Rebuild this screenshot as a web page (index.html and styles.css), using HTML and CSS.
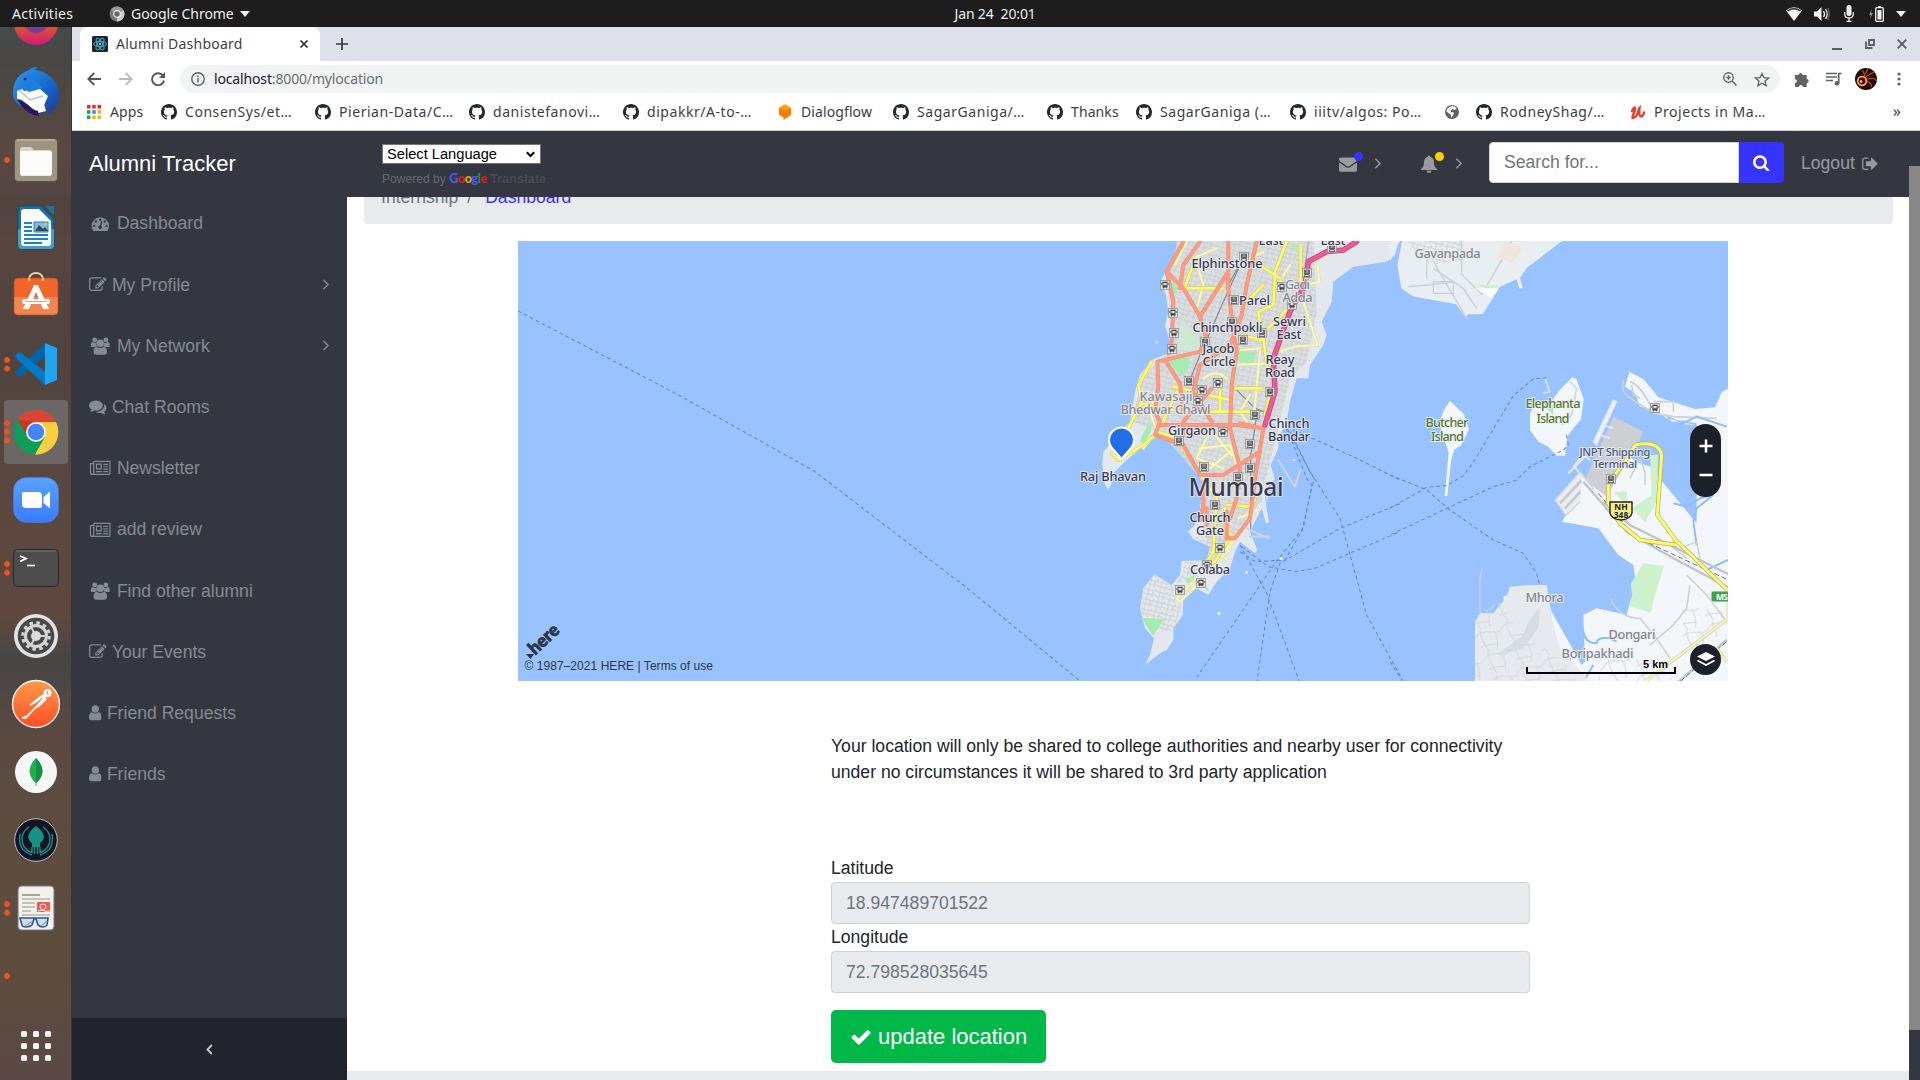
FILE: index.html
```html
<!DOCTYPE html>
<html lang="en">
<head>
<meta charset="utf-8">
<title>Alumni Dashboard</title>
<link rel="stylesheet" href="styles.css">
</head>
<body>
<svg class="defs" width="0" height="0" aria-hidden="true">
  <symbol id="github" viewBox="0 0 16 16"><path d="M8 0C3.58 0 0 3.58 0 8c0 3.54 2.29 6.53 5.47 7.59.4.07.55-.17.55-.38 0-.19-.01-.82-.01-1.49-2.01.37-2.53-.49-2.69-.94-.09-.23-.48-.94-.82-1.13-.28-.15-.68-.52-.01-.53.63-.01 1.08.58 1.23.82.72 1.21 1.87.87 2.33.66.07-.52.28-.87.51-1.07-1.78-.2-3.64-.89-3.64-3.95 0-.87.31-1.59.82-2.15-.08-.2-.36-1.02.08-2.12 0 0 .67-.21 2.2.82.64-.18 1.32-.27 2-.27s1.36.09 2 .27c1.53-1.04 2.2-.82 2.2-.82.44 1.1.16 1.92.08 2.12.51.56.82 1.27.82 2.15 0 3.07-1.87 3.75-3.65 3.95.29.25.54.73.54 1.48 0 1.07-.01 1.93-.01 2.2 0 .21.15.46.55.38A8.01 8.01 0 0016 8c0-4.42-3.58-8-8-8z"/></symbol>
  <symbol id="angle" viewBox="595 320 580 1280"><path d="M1171 960q0 13-10 23l-466 466q-10 10-23 10t-23-10l-50-50q-10-10-10-23t10-23l393-393-393-393q-10-10-10-23t10-23l50-50q10-10 23-10t23 10l466 466q10 10 10 23z"/></symbol>
  <symbol id="edit" viewBox="0 0 1792 1792"><path d="M888 1184l116-116-152-152-116 116v56h96v96h56zm440-720q-16-16-33 1l-350 350q-17 17-1 33t33-1l350-350q17-17 1-33zm80 594v190q0 119-84.5 203.5t-203.5 84.5h-832q-119 0-203.5-84.5t-84.5-203.5v-832q0-119 84.5-203.5t203.5-84.5h832q63 0 117 25 15 7 18 23 3 17-9 29l-49 49q-14 14-32 8-23-6-45-6h-832q-66 0-113 47t-47 113v832q0 66 47 113t113 47h832q66 0 113-47t47-113v-126q0-13 9-22l64-64q15-15 35-7t20 29zm-96-738l288 288-672 672h-288v-288zm444 132l-92 92-288-288 92-92q28-28 68-28t68 28l152 152q28 28 28 68t-28 68z"/></symbol>
  <symbol id="comments" viewBox="0 0 1792 1792"><path d="M1408 768q0 139-94 257t-256.5 186.5-353.5 68.5q-86 0-176-16-124 88-278 128-36 9-86 16h-3q-11 0-20.5-8t-11.5-21q-1-3-1-6.5t.5-6.5 2-6l2.5-5 3.5-5.5 4-5 4.5-5 4-4.5q5-6 23-25t26-29.5 22.5-29 25-38.5 20.5-44q-124-72-195-177t-71-224q0-139 94-257t256.5-186.5 353.5-68.5 353.5 68.5 256.5 186.5 94 257zm384 256q0 120-71 224.5t-195 176.5q10 24 20.5 44t25 38.5 22.5 29 26 29.5 23 25q1 1 4 4.5t4.5 5 4 5 3.5 5.5l2.5 5 2 6 .5 6.5-1 6.5q-3 14-13 22t-22 7q-50-7-86-16-154-40-278-128-90 16-176 16-271 0-472-132 58 4 88 4 161 0 309-45t264-129q125-92 192-212t67-254q0-77-23-152 129 71 204 178t75 230z"/></symbol>
  <symbol id="user" viewBox="256 0 1280 1792"><path d="M1536 1399q0 109-62.5 187t-150.5 78h-854q-88 0-150.5-78t-62.5-187q0-85 8.5-160.5t31.5-152 58.5-131 94-89 134.5-34.5q131 128 313 128t313-128q76 0 134.5 34.5t94 89 58.5 131 31.5 152 8.5 160.5zm-256-887q0 159-112.5 271.5t-271.5 112.5-271.5-112.5-112.5-271.5 112.5-271.5 271.5-112.5 271.5 112.5 112.5 271.5z"/></symbol>
  <symbol id="users" viewBox="0 0 23 18"><circle cx="5.8" cy="2.8" r="2.5"/><circle cx="17.2" cy="2.8" r="2.5"/><path d="M2 10V8q0-3 1.8-3 2 1.5 4 .7Q7 8 8.300 9.500L5 10zM21 10V8q0-3-1.800-3-2 1.500-4 .7.8 2.300-.5 3.800L18 10z"/><circle cx="11.500" cy="6.200" r="3.900"/><path d="M4.600 15.200q0-5.200 3.200-5.400 3.700 2.500 7.400 0 3.200.2 3.200 5.400 0 2.600-2.400 2.600H7q-2.400 0-2.400-2.600z"/></symbol>
  <symbol id="news" viewBox="0 0 23 18"><path d="M4.800 2.300h16.500v12.200q0 1-1 1H3.300q-1.800 0-1.800-1.700V4.500h3M4.800 2.300v11.500q0 1.700-1.500 1.700" fill="none" stroke="currentColor" stroke-width="1.200"/><path d="M7 4.500h6v6H7zM8.200 5.700v3.600h3.600V5.700zM14.500 4.700h5v1.200h-5zM14.500 7.100h5v1.200h-5zM14.500 9.500h5v1.200h-5zM7 12h6v1.200H7zM14.500 12h5v1.200h-5z" fill-rule="evenodd"/></symbol>
  <symbol id="gauge" viewBox="0 0 23 18"><path fill-rule="evenodd" d="M2.700 10.900a8.800 8.800 0 1117.600 0q0 2.700-1.300 4.700-.3.400-.8.400H4.800q-.5 0-.8-.4-1.300-2-1.300-4.700zM5.200 9.700a1.200 1.200 0 100 2.400 1.200 1.200 0 000-2.400zM7 5.300a1.200 1.200 0 100 2.400 1.200 1.200 0 000-2.400zM11.500 3.500a1.200 1.200 0 100 2.400 1.200 1.200 0 000-2.400zM16 5.300a1.200 1.200 0 100 2.400 1.200 1.200 0 000-2.400zM17.800 9.700a1.200 1.200 0 100 2.400 1.200 1.200 0 000-2.400zM12.200 6.600l-.9 3.700a1.900 1.900 0 101.200.4l1-3.800q0-1-.7-.8z"/></symbol>
  <symbol id="train" viewBox="0 0 10 10"><rect x=".4" y=".4" width="9.200" height="9.200" fill="#d8dadb" stroke="#888" stroke-width=".7"/><rect x="2.200" y="1.800" width="5.600" height="5" rx=".8" fill="#444"/><path d="M3 3h4M3 4.800h4M5 2.500v2.300" stroke="#ddd" stroke-width=".6"/><path d="M3 7l-1 1.500h6L7 7" stroke="#444" fill="none" stroke-width=".7"/></symbol>
  <symbol id="bus" viewBox="0 0 10 10"><rect x=".4" y=".4" width="9.200" height="9.200" fill="#dfe0e1" stroke="#888" stroke-width=".7"/><path d="M2.500 1.700h5v5.800h-1v1H6v-1H4v1h-.8v-1h-.7zM3.400 3v2.300h3.200V3z" fill="#444" fill-rule="evenodd"/><path d="M1.700 3v2M8.300 3v2" stroke="#444" stroke-width=".7"/></symbol>
</svg>

<header class="gnome-bar">
  <span class="gnome-activities">Activities</span>
  <span class="gnome-app">
    <svg width="16" height="16" viewBox="0 0 16 16"><circle cx="8" cy="8" r="7.500" fill="#777"/><path d="M8 8L1.500 4.300A7.500 7.500 0 0114.500 4.300z" fill="#999"/><path d="M8 8L14.500 4.300A7.500 7.500 0 018 15.500z" fill="#ccc"/><circle cx="8" cy="8" r="3.300" fill="#666" stroke="#eee" stroke-width="1.200"/></svg>
    <span>Google Chrome</span>
    <svg width="10" height="6" viewBox="0 0 10 6"><path d="M0 0h10L5 6z" fill="#eee"/></svg>
  </span>
  <time class="gnome-clock">Jan 24&nbsp; 20:01</time>
  <span class="gnome-tray">
    <svg width="16" height="16" viewBox="0 0 16 16"><path d="M0 4.500Q8-2 16 4.500L8 15z" fill="#f2f2f2"/><path d="M1.500 5Q8 .5 14.500 5" fill="none" stroke="#1d1d1d" stroke-width="1.300"/><path d="M2 5.500Q8 1 14 5.500" fill="none" stroke="#888" stroke-width=".6"/></svg>
    <svg width="16" height="16" viewBox="0 0 16 16"><path d="M0 5.500h3L7.500 1v14L3 10.500H0z" fill="#f2f2f2"/><path d="M9.500 5q2 3 0 6M11.500 3q3.500 5 0 10" fill="none" stroke="#f2f2f2" stroke-width="1.300"/><path d="M14 2q3 6 0 12" fill="none" stroke="#777"/></svg>
    <svg width="10" height="17" viewBox="0 0 10 17"><rect x="2.500" y="0" width="5" height="11" rx="2.500" fill="#f2f2f2"/><path d="M.7 7v2q0 4 4.300 4t4.300-4V7M5 13v3M2.500 16.300h5" fill="none" stroke="#f2f2f2" stroke-width="1.300"/></svg>
    <svg width="15" height="16" viewBox="0 0 15 16"><path d="M3 3L0 9h2l-1 4 3-6H2z" fill="#999"/><path d="M9 0h3v1.500H9z" fill="#f2f2f2"/><rect x="6.700" y="1.700" width="7.600" height="13.600" rx="1" fill="none" stroke="#f2f2f2" stroke-width="1.300"/><path d="M8.500 4h4v9.500h-4z" fill="#f2f2f2"/></svg>
    <svg width="10" height="6" viewBox="0 0 10 6"><path d="M0 0h10L5 6z" fill="#eee"/></svg>
  </span>
</header>

<div class="desktop">
  <nav class="dock">
    <div class="dock-cell dock-cell-cut"><svg width="48" height="48" viewBox="0 0 48 48"><defs><linearGradient id="ff" x1="0" x2="0" y1="0" y2="1"><stop offset=".55" stop-color="#d85a2c"/><stop offset="1" stop-color="#d6187a"/></linearGradient></defs><circle cx="24" cy="24" r="22" fill="url(#ff)"/><circle cx="24" cy="22" r="12" fill="#7a3f90"/></svg></div>
    <div class="dock-cell"><svg width="50" height="50" viewBox="0 0 50 50"><defs><linearGradient id="tb" x1="0" x2="1" y1="0" y2="1"><stop offset="0" stop-color="#2d9bf0"/><stop offset=".6" stop-color="#1565c8"/><stop offset="1" stop-color="#2a2f86"/></linearGradient></defs><path d="M2 28Q1 9 18 3q3-3 8-3l-2 3q18 2 24 21 2 16-12 24l2-6-10 7 2-7-10-2L8 38q-5-4-6-10z" fill="url(#tb)"/><path d="M9 25l19-4 9 8-5 12-23-9z" fill="#f6f8fb"/><path d="M6 24l5-2 12 12L6 32zM11 33l20-3 4 14-8 2z" fill="#fff"/><path d="M8 23l11 10 13-4" fill="none" stroke="#b8c4d4" stroke-width="1.400"/><path d="M10 19Q12 6 25 6q-4 5 1 9l6 6-14 4z" fill="#1a7fe0"/><path d="M6 32q10 4 15 10l6 2 1 5q-13-1-22-17z" fill="#2b145c"/><circle cx="14" cy="12" r="1.300" fill="#012"/></svg></div>
    <div class="dock-cell"><i class="pips pips-1"></i><svg width="48" height="48" viewBox="0 0 48 48"><rect x="2.500" y="2.500" width="43" height="43" rx="3.500" fill="#9d957f" stroke="#5b5547"/><path d="M5 4h38" stroke="#c4beac"/><path d="M8 33V14q0-3 3-3h8l3 3h15q3 0 3 3v20q0 3-3 3H11q-3 0-3-3z" fill="#d9d5c8"/><rect x="8" y="15" width="32" height="24.500" rx="2.500" fill="#fbfbf9"/></svg></div>
    <div class="dock-cell"><svg width="48" height="48" viewBox="0 0 48 48"><path d="M9 2h20l13 13v26q0 4-4 4H10q-4 0-4-4V6q0-4 3-4z" fill="#1872a8" stroke="#164a6b"/><path d="M6 25h36v17q0 3-4 3H10q-4 0-4-4z" fill="#419dca"/><path d="M33 2h9v9z" fill="#1b75ab"/><path d="M12 5h15l12 12v22q0 3-3 3H12q-3 0-3-3V8q0-3 3-3z" fill="#fafafa"/><path d="M12 19h8v2h-8zM12 23h8v2h-8zM12 27h8v2h-8zM12 31h24v2H12zM12 35h24v2H12zM12 39h18v2H12z" transform="translate(0 -1)" fill="#1d84c0"/><path d="M22 18h14v10H22z" fill="#78bde8" stroke="#1d84c0"/><path d="M23 27l4-6 4 4 2-2 3 4z" fill="#444"/><circle cx="34" cy="20" r="1.400" fill="#f2c52d"/></svg></div>
    <div class="dock-cell"><svg width="48" height="48" viewBox="0 0 48 48"><path d="M17 10V7q1-6 7-6t7 6v3" fill="none" stroke="#e9cfa0" stroke-width="2"/><rect x="2" y="6" width="44" height="37" rx="4" fill="#f2642a" stroke="#a64b23" stroke-width=".8"/><path d="M2.500 25h43v14q0 3.500-3.500 3.500H6q-3.500 0-3.500-3.500z" fill="#f28550"/><path d="M17.500 9l-.7-3M30.500 9l.7-3" stroke="#e9cfa0" stroke-width="2"/><path d="M22 13h4l11 24h-6l-7-17-7 17h-6z" fill="#fff"/><rect x="10" y="27" width="28" height="5" rx="2.500" fill="#fff"/><path d="M13 29.500h22" stroke="#f28550" stroke-width=".8"/></svg></div>
    <div class="dock-cell"><i class="pips pips-2"></i><svg width="48" height="48" viewBox="0 0 48 48"><path d="M3 32L33 3v13L9 36q-2 1-4-1l-2-2z" fill="#0065a9"/><path d="M3 16l2-3q2-1 4 0l24 19v13L3 17z" fill="#007acc"/><path d="M33 3l12 5v32l-12 5z" fill="#22a5f1"/></svg></div>
    <div class="dock-cell"><i class="dock-active"></i><i class="pips pips-3"></i><svg width="48" height="48" viewBox="0 0 48 48"><circle cx="24" cy="24" r="22.500" fill="#0f9d58"/><path d="M24 24L5.500 11.500A22.500 22.500 0 0144 14z" fill="#db4437"/><path d="M24 14h20A22.500 22.500 0 0123 46.500L33 29z" fill="#ffcd40"/><path d="M5.500 11.500L15 28l9-14z" fill="#c53929"/><circle cx="24" cy="24" r="10" fill="#f1f1f1"/><circle cx="24" cy="24" r="8.200" fill="#4285f4"/></svg></div>
    <div class="dock-cell"><svg width="48" height="48" viewBox="0 0 48 48"><defs><linearGradient id="zm" x1="0" x2="0" y1="0" y2="1"><stop offset="0" stop-color="#58a2ff"/><stop offset="1" stop-color="#3a7cff"/></linearGradient></defs><rect x="1.500" y="1.500" width="45" height="45" rx="13" fill="url(#zm)" stroke="#4c7cc8" stroke-width=".6"/><path d="M10 18q0-2 2-2h14q4 0 4 4v10q0 2-2 2H14q-4 0-4-4zM31.500 21l6-5h.5v16h-.5l-6-5z" fill="#fff"/></svg></div>
    <div class="dock-cell"><i class="pips pips-2"></i><svg width="48" height="48" viewBox="0 0 48 48"><rect x="1.500" y="5.500" width="45" height="37" rx="4" fill="#4d4d4d" stroke="#2a2624"/><path d="M4 7h40" stroke="#777"/><path d="M8 12l6 2.500-6 3" fill="none" stroke="#fff" stroke-width="1.800"/><path d="M15 21.500h8" stroke="#fff" stroke-width="1.600"/></svg></div>
    <div class="dock-cell"><svg width="48" height="48" viewBox="0 0 48 48"><circle cx="24" cy="24" r="22" fill="#e2e2e2"/><circle cx="24" cy="24" r="18.300" fill="#484848"/><circle cx="24" cy="24" r="13.300" fill="none" stroke="#d5d5d5" stroke-width="3" stroke-dasharray="3.500 3.460"/><circle cx="24" cy="24" r="10.500" fill="none" stroke="#d5d5d5" stroke-width="3"/><path d="M24 24h10M24 24l-5-9M24 24l-5 9" stroke="#d5d5d5" stroke-width="2"/><circle cx="24" cy="24" r="5" fill="#ddd"/></svg></div>
    <div class="dock-cell"><svg width="50" height="50" viewBox="0 0 50 50"><defs><linearGradient id="pm" x1="0" x2="0" y1="0" y2="1"><stop offset="0" stop-color="#ff9a4a"/><stop offset="1" stop-color="#ff4d26"/></linearGradient></defs><circle cx="25" cy="25" r="23.500" fill="url(#pm)" stroke="#fff" stroke-width="1.300"/><circle cx="36.500" cy="14" r="4" fill="#fff"/><path d="M34 18L19 26l10-8 4-2 2 4-7 7-4 2-8 8-5 2h4z" fill="#fff" stroke="#fff" stroke-width="1.500"/><path d="M31 19L22 28M36 12l1 4" stroke="#ff7038"/></svg></div>
    <div class="dock-cell"><svg width="48" height="48" viewBox="0 0 48 48"><circle cx="24" cy="24" r="21" fill="#f7f7f7"/><path d="M24 10q13 13 0 25.500Q11 23 24 10z" fill="#20ae52"/><path d="M24 10q13 13 0 25.500z" fill="#178f45"/><path d="M24 34v4" stroke="#999"/></svg></div>
    <div class="dock-cell"><svg width="48" height="48" viewBox="0 0 48 48"><circle cx="24" cy="24" r="21.300" fill="#141424" stroke="#bbb"/><path d="M24 10q7 5 8 11-1 4-4 6v4h-8v-4q-3-2-4-6 1-6 8-11z" fill="#179287"/><path d="M22.500 31v7M25.500 31v7M17 11Q8 17 10.500 27q2 7 9.500 9.500V31M31 11q9 6 6.500 16-2 7-9.500 9.500V31M8 18Q5 34 20 39M40 18q3 16-12 21" fill="none" stroke="#179287" stroke-width="1.400"/></svg></div>
    <div class="dock-cell"><i class="pips pips-2"></i><svg width="48" height="48" viewBox="0 0 48 48"><rect x="6" y="2" width="36" height="44" rx="3.500" fill="#f1f1f0" stroke="#777"/><path d="M10 11h18" stroke="#a8a590" stroke-width="2"/><path d="M10 15h28M10 19h13M10 23h13M10 27h9M10 31h28" stroke="#c7c4b6" stroke-width="1.800"/><path d="M25 18h13v10H25z" fill="#f4574b"/><path d="M26 27q8-1 8-4t-3-3-3 3 5 4 5-1" fill="none" stroke="#fff"/><path d="M8 34l2 7q0 2 4 2t6-2l2-6h2l2 6q2 2 5 2t4-2l1-7z" fill="#d8dce0" stroke="#1f5aa5" stroke-width="1.600"/><path d="M13 42l8-5M29 42l6-5" stroke="#888"/></svg></div>
    <div class="dock-cell"><i class="pips pips-1"></i></div>
    <div class="dock-cell dock-cell-apps"><svg width="32" height="32" viewBox="0 0 32 32" fill="#f2f2f2"><rect x="1" y="1" width="6" height="6" rx="1.500"/><rect x="13" y="1" width="6" height="6" rx="1.500"/><rect x="25" y="1" width="6" height="6" rx="1.500"/><rect x="1" y="13" width="6" height="6" rx="1.500"/><rect x="13" y="13" width="6" height="6" rx="1.500"/><rect x="25" y="13" width="6" height="6" rx="1.500"/><rect x="1" y="25" width="6" height="6" rx="1.500"/><rect x="13" y="25" width="6" height="6" rx="1.500"/><rect x="25" y="25" width="6" height="6" rx="1.500"/></svg></div>
  </nav>

  <main class="browser">
    <div class="tabstrip">
      <div class="tab">
        <svg width="16" height="16" viewBox="0 0 16 16"><rect width="16" height="16" rx="1.500" fill="#20232a"/><g fill="none" stroke="#4fb6d3" stroke-width=".9"><ellipse cx="8" cy="8" rx="6.500" ry="2.500"/><ellipse cx="8" cy="8" rx="6.500" ry="2.500" transform="rotate(60 8 8)"/><ellipse cx="8" cy="8" rx="6.500" ry="2.500" transform="rotate(120 8 8)"/></g><circle cx="8" cy="8" r="1.200" fill="#61dafb"/></svg>
        <span class="tab-title">Alumni Dashboard</span>
        <svg width="8" height="8" viewBox="0 0 8 8"><path d="M.5.5l7 7M7.500.5l-7 7" stroke="#333639" stroke-width="1.600"/></svg>
      </div>
      <svg class="new-tab" width="12" height="12" viewBox="0 0 12 12"><path d="M6 0v12M0 6h12" stroke="#333639" stroke-width="1.700"/></svg>
      <div class="window-buttons">
        <svg width="10" height="12" viewBox="0 0 10 12"><path d="M0 11h10" stroke="#5a5d63" stroke-width="2"/></svg>
        <svg width="10" height="10" viewBox="0 0 10 10"><path d="M4 1h5v5H4zM1 2.500V9h6.500" fill="none" stroke="#5a5d63" stroke-width="1.800"/></svg>
        <svg width="10" height="10" viewBox="0 0 10 10"><path d="M.7.7l8.600 8.600M9.300.7L.7 9.300" stroke="#5a5d63" stroke-width="1.900"/></svg>
      </div>
    </div>
    <div class="toolbar">
      <svg class="tool-back" width="14" height="14" viewBox="0 0 14 14"><path d="M14 7H1.500M7.300 1L1.300 7l6 6" fill="none" stroke="#54575c" stroke-width="1.800"/></svg>
      <svg class="tool-forward" width="14" height="14" viewBox="0 0 14 14"><path d="M0 7h12.500M6.700 1l6 6-6 6" fill="none" stroke="#b9bbbe" stroke-width="1.800"/></svg>
      <svg class="tool-reload" width="14" height="14" viewBox="0 0 14 14"><path d="M12 3.800A6 6 0 1013 8.500" fill="none" stroke="#54575c" stroke-width="1.900"/><path d="M14 0v6H8z" fill="#54575c"/></svg>
      <div class="omnibox">
        <svg width="14" height="14" viewBox="0 0 14 14"><circle cx="7" cy="7" r="6.200" fill="none" stroke="#5f6368" stroke-width="1.400"/><path d="M7 6.200v4.300M7 3.400v1.600" stroke="#5f6368" stroke-width="1.500"/></svg>
        <span class="url"><b>localhost</b>:8000/mylocation</span>
        <svg width="14" height="14" viewBox="0 0 14 14"><circle cx="5.500" cy="5.500" r="4.700" fill="none" stroke="#5f6368" stroke-width="1.400"/><path d="M9 9l4.500 4.500M5.500 3.300v4.400M3.300 5.500h4.400" stroke="#5f6368" stroke-width="1.500"/></svg>
        <svg width="16" height="15" viewBox="0 0 16 15"><path d="M8 1.500l1.900 4.200 4.600.4-3.500 3 1.100 4.500L8 11.200l-4.100 2.400L5 9.100l-3.500-3 4.600-.4z" fill="none" stroke="#5f6368" stroke-width="1.300"/></svg>
      </div>
      <svg class="tool-ext" width="15" height="15" viewBox="0 0 15 15"><path d="M4.500 3a2 2 0 014 0h4.200v4a2 2 0 010 4v4H8.800a1.900 1.900 0 00-3.800 0H1v-4a1.900 1.900 0 000-3.800V3z" fill="#5f6368"/></svg>
      <svg width="16" height="14" viewBox="0 0 16 14"><path d="M0 1.500h11M0 5h11M0 8.500h7" stroke="#5f6368" stroke-width="1.700"/><path d="M12.700 11V1.500h3" fill="none" stroke="#5f6368" stroke-width="1.700"/><circle cx="11" cy="11.300" r="2.400" fill="#5f6368"/></svg>
      <svg width="22" height="22" viewBox="0 0 22 22"><circle cx="11" cy="11" r="11" fill="#240903"/><path d="M9 8Q14 0 12 1M11 9q8-6 8-4M12 11q9-2 9 2M10 9Q8 2 7 2M12 13q6 3 4 6" fill="none" stroke="#b4531a" stroke-width="1.200"/><circle cx="7" cy="13" r="4.300" fill="#3a0d04" stroke="#ffa632" stroke-width="1.800"/><circle cx="6" cy="13.500" r="1.300" fill="#fff0b0"/></svg>
      <svg class="tool-menu" width="4" height="14" viewBox="0 0 4 14" fill="#5f6368"><circle cx="2" cy="2" r="1.600"/><circle cx="2" cy="7" r="1.600"/><circle cx="2" cy="12" r="1.600"/></svg>
    </div>
    <div class="bookmarks">
      <span class="bookmark"><svg class="apps-icon" width="14" height="14" viewBox="0 0 14 14"><path d="M0 0h3.500v3.500H0zM5.250 0h3.500v3.500h-3.500zM10.500 0H14v3.500h-3.500z" fill="#ea2d23"/><path d="M0 5.250h3.500v3.500H0z" fill="#21a452"/><path d="M5.250 5.250h3.500v3.500h-3.500z" fill="#3f7ff1"/><path d="M10.500 5.250H14v3.500h-3.500zM5.250 10.500h3.500V14h-3.500zM10.500 10.500H14V14h-3.500z" fill="#f9b50c"/><path d="M0 10.500h3.500V14H0z" fill="#21a452"/></svg><span>Apps</span></span>
      <span class="bookmark"><svg width="16" height="16"><use href="#github"/></svg><span>ConsenSys/et…</span></span>
      <span class="bookmark"><svg width="16" height="16"><use href="#github"/></svg><span>Pierian-Data/C…</span></span>
      <span class="bookmark"><svg width="16" height="16"><use href="#github"/></svg><span>danistefanovi…</span></span>
      <span class="bookmark"><svg width="16" height="16"><use href="#github"/></svg><span>dipakkr/A-to-…</span></span>
      <span class="bookmark"><svg width="16" height="16" viewBox="0 0 16 16"><path d="M2 4l6-3.500L14 4v7l-7.500 5V13.500L2 11z" fill="#ff7a00"/><path d="M2 4l6-3.500L14 4 8 7.500z" fill="#ffa000"/></svg><span>Dialogflow</span></span>
      <span class="bookmark"><svg width="16" height="16"><use href="#github"/></svg><span>SagarGaniga/…</span></span>
      <span class="bookmark"><svg width="16" height="16"><use href="#github"/></svg><span>Thanks</span></span>
      <span class="bookmark"><svg width="16" height="16"><use href="#github"/></svg><span>SagarGaniga (…</span></span>
      <span class="bookmark"><svg width="16" height="16"><use href="#github"/></svg><span>iiitv/algos: Po…</span></span>
      <span class="bookmark"><svg width="16" height="16" viewBox="0 0 16 16"><circle cx="8" cy="8" r="7" fill="#5f6368"/><path d="M8 2q4 0 4.500 3L10 6 9 5 7 6v2l3 .5L9 12l-2 1.500V11L3 8l-.8-1Q3 4 5.500 3z" fill="#f1f3f4"/></svg></span>
      <span class="bookmark"><svg width="16" height="16"><use href="#github"/></svg><span>RodneyShag/…</span></span>
      <span class="bookmark"><svg width="16" height="16" viewBox="0 0 16 16"><path d="M2 7q2-4 3-3.500T3.500 10t1 3q2 0 3.500-5 .5-3 1.500-4-1 8 1.500 8.500 2 0 3-4" fill="none" stroke="#ec3b2f" stroke-width="2.400" stroke-linecap="round"/></svg><span>Projects in Ma…</span></span>
      <span class="bookmark-more">»</span>
    </div>

    <div class="page">
      <aside class="sidebar">
        <a class="brand">Alumni Tracker</a>
        <ul class="menu">
          <li><svg class="fw" viewBox="0 0 23 18"><use href="#gauge"/></svg><span>Dashboard</span></li>
          <li><svg class="em"><use href="#edit"/></svg><span>My Profile</span><svg class="chev"><use href="#angle"/></svg></li>
          <li><svg class="fw"><use href="#users"/></svg><span>My Network</span><svg class="chev"><use href="#angle"/></svg></li>
          <li><svg class="em"><use href="#comments"/></svg><span>Chat Rooms</span></li>
          <li><svg class="fw"><use href="#news"/></svg><span>Newsletter</span></li>
          <li><svg class="fw"><use href="#news"/></svg><span>add review</span></li>
          <li><svg class="fw"><use href="#users"/></svg><span>Find other alumni</span></li>
          <li><svg class="em"><use href="#edit"/></svg><span>Your Events</span></li>
          <li><svg class="slim"><use href="#user"/></svg><span>Friend Requests</span></li>
          <li><svg class="slim"><use href="#user"/></svg><span>Friends</span></li>
        </ul>
        <div class="sidebar-toggle"><svg width="7" height="11" viewBox="0 0 7 11"><path d="M5.800 1L1.500 5.500 5.800 10" fill="none" stroke="#c3c6ca" stroke-width="1.900"/></svg></div>
      </aside>

      <section class="column">
        <header class="navbar">
          <div class="translate">
            <div class="lang-select">Select Language<svg width="9" height="7" viewBox="0 0 9 7"><path d="M.8 1.200L4.500 5 8.200 1.200" fill="none" stroke="#000" stroke-width="2"/></svg></div>
            <div class="powered">Powered by <span class="google"><b class="g-blue">G</b><b class="g-red">o</b><b class="g-yellow">o</b><b class="g-blue">g</b><b class="g-green">l</b><b class="g-red">e</b></span> <b class="translate-word">Translate</b></div>
          </div>
          <div class="alert-link">
            <svg width="18" height="18" viewBox="0 0 1792 1792"><path fill="currentColor" d="M1792 710v794q0 66-47 113t-113 47h-1472q-66 0-113-47t-47-113v-794q44 49 101 87 362 246 497 345 57 42 92.500 65.500t94.500 48 110 24.500h2q51 0 110-24.500t94.500-48 92.500-65.500q170-123 498-345 57-39 100-87zm0-294q0 79-49 151t-122 123q-376 261-468 325-10 7-42.500 31t-54 38.500-52 32.500-57.500 27-50 9h-2q-23 0-50-9t-57.500-27-52-32.500-54-38.500-42.500-31q-91-64-262-182.500t-205-142.500q-62-42-117-115.500t-55-136.500q0-78 41.500-130t118.500-52h1472q65 0 112.500 47t47.500 113z"/></svg>
            <i class="dot dot-blue"></i>
            <svg class="chev"><use href="#angle"/></svg>
          </div>
          <div class="alert-link">
            <svg width="18" height="18" viewBox="0 0 18 18"><path fill="currentColor" d="M9 .5q1.200 0 1.200 1.300Q14 2.700 14 7.500q0 4.500 3.200 6.700 0 .9-.9.900H1.700q-.9 0-.9-.9Q4 12 4 7.500q0-4.800 3.800-5.700Q7.800.5 9 .5zM6.500 15.800h5Q11 18 9 18t-2.500-2.200z"/></svg>
            <i class="dot dot-yellow"></i>
            <svg class="chev"><use href="#angle"/></svg>
          </div>
          <div class="search">
            <span class="search-field">Search for...</span>
            <span class="search-button"><svg width="16.400" height="17.600" viewBox="64 0 1664 1792"><path fill="#fff" d="M1216 832q0-185-131.500-316.500t-316.500-131.500-316.500 131.500-131.500 316.500 131.500 316.500 316.500 131.500 316.500-131.500 131.500-316.500zm512 832q0 52-38 90t-90 38q-54 0-90-38l-343-342q-179 124-399 124-143 0-273.500-55.500t-225-150-150-225-55.500-273.500 55.500-273.500 150-225 225-150 273.500-55.500 273.500 55.500 225 150 150 225 55.500 273.500q0 220-124 399l343 343q37 37 37 90z"/></svg></span>
          </div>
          <span class="logout">Logout<svg width="16" height="17.600" viewBox="64 0 1600 1792"><path fill="currentColor" d="M704 1440q0 4 1 20t.5 26.500-3 23.500-10 19.500-20.500 6.500h-320q-119 0-203.500-84.500t-84.500-203.500v-704q0-119 84.500-203.500t203.500-84.500h320q13 0 22.500 9.500t9.500 22.500q0 4 1 20t.5 26.500-3 23.500-10 19.500-20.500 6.500h-320q-66 0-113 47t-47 113v704q0 66 47 113t113 47h312l11.500 1 11.500 3 8 5.500 7 9 2 13.500zm928-544q0 26-19 45l-544 544q-19 19-45 19t-45-19-19-45v-288h-448q-26 0-45-19t-19-45v-384q0-26 19-45t45-19h448v-288q0-26 19-45t45-19 45 19l544 544q19 19 19 45z"/></svg></span>
        </header>

        <div class="content">
          <div class="breadcrumb"><span>Internship</span><span>/</span><a>Dashboard</a></div>

          <svg class="map" viewBox="518 241 1210 440">
            <defs>
              <pattern id="streets" width="34" height="30" patternUnits="userSpaceOnUse" patternTransform="rotate(14)"><path d="M0 8h34M6 0v30M20 8v22M0 21h20M27 0v8M20 17l14 5" fill="none" stroke="#c6cbcf" stroke-width="2.400"/></pattern>
              <pattern id="lanes" width="83" height="71" patternUnits="userSpaceOnUse" patternTransform="rotate(-20)"><path d="M0 12q20-10 44 4t39-4M14 0q-8 36 6 71M50 14q10 20-6 57M0 48h20l30 8" fill="none" stroke="#d3d8dd" stroke-width="3"/></pattern>
              <path id="city" d="M355 0L345 60 318 110 300 140 318 180 325 230 315 270 330 320 325 355 275 375 240 420 225 470 210 560 165 610 130 650 127 690 134 745 142 762 152 755 160 715 200 675 260 625 300 600 350 620 400 690 430 750 415 855 385 890 400 912 450 935 440 975 365 978 360 1020 335 1050 283 1018 250 1060 240 1120 255 1180 282 1210 270 1260 255 1290 300 1255 320 1245 340 1215 340 1180 368 1140 370 1095 410 1060 445 1080 470 1040 510 1000 525 950 540 920 585 955 592 945 570 890 585 860 605 820 618 865 627 862 615 790 625 740 645 735 632 690 655 640 655 610 680 560 690 500 710 430 745 430 750 390 790 330 800 300 785 260 815 200 820 140 880 95 980 80 1005 60 1020 0z"/>
              <path id="core" d="M360 0L320 130 340 340 250 420 215 560 300 590 430 740 430 900 470 960 520 920 600 800 650 600 690 430 740 380 770 230 760 0z"/>
            </defs>
            <rect x="518" y="241" width="1210" height="440" fill="#99c3ff"/>
            <path d="M518 311l155 81 141 79 153 117 113 93" fill="none" stroke="#5c88ee" stroke-width="1.100" stroke-dasharray="3.700 3"/>

            <g transform="translate(1060 235) scale(.33333)">
              <use href="#city" fill="#e3e8ed"/>
              <use href="#core" fill="#d8dcdf" opacity=".8"/>
              <use href="#core" fill="url(#streets)"/>
              <path d="M283 1018L335 1050l32 60-30 80-80-10-15-60 10-60z" fill="url(#streets)"/>
              <path d="M400 905l45 30 0 40-70 0-10 45-25 30 60-20 90-70 50-60z" fill="url(#streets)"/>
              <g fill="#a5ecb1"><path d="M322 375l68-15-5 40-22 22zM245 1148l68 5-34 50zM535 348l55 5-15 35-40-10zM335 130l18 30-8 16-12-10zM240 615l30-60 5 30-25 45zM375 1035l30-15-15 30zM430 1055l15 5v10z"/></g>
              <path d="M362 250l55 60 5 40-70-5z" fill="#cde8d3"/>
              <path d="M690 30l30 5-5 60 15-20z" fill="#b7e9c3"/>
              <g fill="none" stroke-linecap="round" stroke-linejoin="round">
                <path d="M590 710l15 90M625 740l-5 60M655 675l50 80 16-52M570 905l58-1M560 880l65 30" stroke="#cdd5de" stroke-width="6"/>
                <g stroke="#85898e" stroke-width="3.500"><path d="M545 80L490 200 420 360 388 440M525 460l60 60 40 15M510 140l25-45M572 880V660l20-130"/><path d="M745 20l-22 180" stroke="#a2a8ae"/></g>
                <g stroke="#dcd9a0" stroke-width="9"><path id="pale" d="M380 20L345 90M410 90l20 60-20 70M470 40L400 70M770 60l8 80-40 10M730 200l42 130-70 5-60 20M510 390l120-5M540 460l90 5M430 430q40-30 70 0M600 350L580 560M420 640l90-10 20 60M450 700l60-50M465 600l50 60M610 50l-60 30M640 170l50-80M500 955l20-40M535 850l60-25M500 975l-15-15 30-40M410 1030l-60 60 10 10 70-70M540 345l60-5M440 610l-30 60 80 30M250 640l40-50-20-60 25-60M560 560l-20-30 30-50"/></g>
                <use href="#pale" stroke="#f7f8b8" stroke-width="6.500"/>
                <path id="yellow" d="M405 75L375 155M370 160h120M275 380L235 450 245 500 205 580M340 455l170 40M350 470l-45 100M240 505l100 20M455 530h120M480 430v100M590 85L660 130M680 20L645 110 640 210 595 230 605 300M610 150L560 200M722 30v120M690 215L605 300M610 310l12 90M545 300l60 15M630 480l-15 60M525 460h80M175 675L250 630 295 590 350 610 430 730 470 790 460 950 440 980M495 820v60l20 20-50 80-35 20M500 810l65 5 20-20M155 655l25 20" stroke="#d7c94e" stroke-width="11"/>
                <path d="M405 75L375 155M370 160h120M275 380L235 450 245 500 205 580M340 455l170 40M350 470l-45 100M240 505l100 20M455 530h120M480 430v100M590 85L660 130M680 20L645 110 640 210 595 230 605 300M610 150L560 200M722 30v120M690 215L605 300M610 310l12 90M545 300l60 15M630 480l-15 60M525 460h80M175 675L250 630 295 590 350 610 430 730 470 790 460 950 440 980M495 820v60l20 20-50 80-35 20M500 810l65 5 20-20M155 655l25 20" stroke="#fbf872" stroke-width="8"/>
                <path d="M370 20L320 110 370 160 420 245 440 310 420 350 292 380 295 450 285 530 300 560 285 600 370 630 420 720M320 110l20 90-5 120-10 35M420 20L370 90l-10 70M505 20v140l15 130 10 60-15 100-5 130 30 120-5 60M505 110L420 245M590 20L560 150 545 240 510 330 420 390 400 470 455 560M315 375l45 70 10 90M300 570l230 0 80 10L590 700M540 565l70 15M430 720l60 0 110-70M590 690l-20 160-45 60-25 0 0-80M430 740v70l-10 45M440 820v50M510 850l20-60M370 600v-40l85-100" stroke="#e58e7c" stroke-width="12"/>
                <path d="M370 20L320 110 370 160 420 245 440 310 420 350 292 380 295 450 285 530 300 560 285 600 370 630 420 720M320 110l20 90-5 120-10 35M420 20L370 90l-10 70M505 20v140l15 130 10 60-15 100-5 130 30 120-5 60M505 110L420 245M590 20L560 150 545 240 510 330 420 390 400 470 455 560M315 375l45 70 10 90M300 570l230 0 80 10L590 700M540 565l70 15M430 720l60 0 110-70M590 690l-20 160-45 60-25 0 0-80M430 740v70l-10 45M440 820v50M510 850l20-60M370 600v-40l85-100" stroke="#ff9a80" stroke-width="9"/>
                <path d="M890 20L850 45 800 50 745 80 735 150 690 230 640 370 645 470 615 570" stroke="#c43d77" stroke-width="16"/><path d="M890 20L850 45 800 50 745 80 735 150 690 230 640 370 645 470 615 570" stroke="#ef5a94" stroke-width="12"/>
                <g stroke="#5c88ee" stroke-width="3.200" stroke-dasharray="11 9" stroke-linecap="butt"><path d="M680 580l60 150 15 20-25 130-55 95-90 5-45-30M682 582l80 150-35 150-80 100-240 350M690 590l60 120 90 140 80 290 110 200M700 585l180 80 140 70M540 930l80 145 100 270M545 935l80 60 80 15 60-10 255-110M1020 806L840 880 660 985 630 1070 590 1345"/></g>
              </g>
              <g fill="#f4f7fb"><circle cx="477" cy="1135" r="5"/><circle cx="560" cy="1012" r="4"/><circle cx="663" cy="971" r="4"/><circle cx="702" cy="675" r="3"/><circle cx="290" cy="322" r="3"/></g>
            </g>

            <g transform="translate(1390 235) scale(.33333)">
              <path d="M0 0h38L0 80zM40 0L22 90l12 70 34 24 130 24 30 42 5-12h45l52-83 50-22 8 28 10-2-8-30 20-30L520 15V0z" fill="#e9eef3"/>
              <path d="M215 18v100l60 60 70-120 30-60M130 100l90 60 40 60M130 80l100 170M130 140h60v35h-60zM55 155l60-5 80-10M110 50v80" fill="none" stroke="#cbd0d5" stroke-width="4"/>
              <path d="M60 18h160v60l-80 10-90-60z" fill="url(#streets)"/>
              <path d="M345 18l55 20-35 45-45-15z" fill="#efe6dc"/>
              <path d="M255 148l75 5-15 12z" fill="#c6f3c4"/>
              <path d="M255 160l70 0-20 30z" fill="#f9fafc"/>
              <path d="M180 498l42 40 15 45-25 50-18 10-10 30-12 110-8 0 12-130-10-30-18-60 15-40z" fill="#f3f6fb"/>
              <path d="M470 520l-25-25-25 40 0 50 25 35 30 15 25 27 25 0 8-60 40-50 8-60-22-60-12-5-40 40z" fill="#f3f6fb"/>
              <path d="M540 440l20 20-15 80-30 30M465 430l14 40-20 5" fill="none" stroke="#d7dce2" stroke-width="6"/>
              <path d="M470 520l20-10v30z" fill="#a9edac"/>
              <path d="M720 412l40 20 45 55 110 35 60-5 20-45 20-12v910H280l-25-30 0-150 15-25 40 0 35-40-5-40 50-20 65 5 30 60 90 160 10-10-5-140 40-20 90 20 10-40 20-40-10-70-45-30-60-80-110-20 40-60 60-80 40-40 40-30 45 30 40 15 140 170 0-300-60-10-60-30-50-10-15-40-30-20 15-50z" fill="#f3f6fb"/>
              <path d="M730 470l100 80 170 40v-60l-30 45-120-10-60-60z" fill="#f3f6fb"/>
              <path d="M820 565l70-10-30 22z" fill="#99c3ff"/>
              <path d="M860 580l60 40 40 60v80l-60-60z" fill="#99c3ff"/>
              <path d="M670 545l90 45-30 60-60 100-20 35-65-50z" fill="#ccd0d5"/>
              <path d="M670 495l10 5-60 130-10-10z" fill="#eef1f5" stroke="#dfe4e9" stroke-width="4"/>
              <path d="M555 690l25-30 20 15M535 715l50-50M550 690l30 40M640 570l30 10M630 600l30 10" fill="none" stroke="#e4e9ee" stroke-width="6"/>
              <path d="M495 795l75-85 40 50 -82 82z" fill="#e9edf1" stroke="#cfd4d9" stroke-width="4"/><path d="M510 805l65-70M525 820l65-70" stroke="#c5cacf" stroke-width="8"/>
              <path d="M575 725l60 75-65 10z" fill="#f3f6fb"/>
              <path d="M780 660l25 0-5 140-35 60-40-40 60-40zM670 770h40v40z" fill="#cdf1cd"/><path d="M760 985l62 8-25 80-15 60-65-20 10-35 -5-30z" fill="#cdf1cd"/>
              <path d="M700 435q-10 40 30 60l60 40 60 10 130 5M720 440q30 10 60 70M725 450l5 30 20 10M790 500h60v30" fill="none" stroke="#ccd1d6" stroke-width="5"/>
              <path d="M580 1190q5 35 40 35 0-20 40-15l20 10M850 805l40 10 40-25 40-10M970 780l-50 40-10 40 10 70M860 575l60-30 90 30M950 1005l64-30M540 1270v50M610 1290l-30 50M325 1310v30" fill="none" stroke="#90bdf8" stroke-width="6"/>
              <path d="M255 1160l15-25 40 0 40-50 10-30 60-5 50 0 20 120 20 70 80 90 0 30H280l-25-30z" fill="#e6eaee"/>
              <path d="M400 1200q20-60 50-80l-5 60-45 60-80 20z" fill="#d3d8dc" opacity=".8"/>
              <path d="M255 1160l15-25 60-35 60 90 120 80 70 90H280l-25-30z" fill="url(#lanes)"/><path d="M640 1270h160l60 80H620z" fill="url(#lanes)"/><path d="M880 1110l130 20v60l-130 60z" fill="url(#lanes)"/>
              <path d="M278 1000l-8 30v110M660 1090q30 60 90 60l50 60 40 60M900 1050l-10 70-40 50-70 60M890 1020l60 60 60 80M720 730l30-60 15 40 0 40M840 930l50 40M870 940l50-20 10 50" fill="none" stroke="#cbd0d5" stroke-width="4.500"/>
              <path d="M580 740l130 150 140 80 170 90M640 800l80 70 300 150M860 1345l150-130" fill="none" stroke="#bfc4ca" stroke-width="7"/>
              <path d="M625 775l110 130 280 130M870 1340l140-120" fill="none" stroke="#777" stroke-width="3" stroke-dasharray="16 8"/>
              <g fill="none" stroke-linejoin="round"><path d="M735 630q70-15 80 30L802 840l55 75 155 150M735 630l-30 50-50 65 0 60 35 60 60 50 110 15" stroke="#b8b259" stroke-width="13"/><path d="M735 630q70-15 80 30L802 840l55 75 155 150M735 630l-30 50-50 65 0 60 35 60 60 50 110 15" stroke="#fbf872" stroke-width="9"/><path d="M765 1340l250-190v-60M980 1240l30 40" stroke="#d6d3a0" stroke-width="10"/><path d="M765 1340l250-190v-60M980 1240l30 40" stroke="#f7f6b4" stroke-width="6"/></g>
              <g fill="none" stroke="#5c88ee" stroke-width="3.200" stroke-dasharray="11 9"><path d="M470 428l-40 4-60 50-60 100-60 100-30 40-50 30-60 5L0 820M530 600l5 30-15 15-100 50-40 40-70 20L0 900M0 720l110 45 70 60 130 90 90 40 40 60 10 40M0 1280l35 55"/></g>
            </g>

            <g class="stations">
              <use href="#bus" x="1160" y="280" width="10" height="10"/><use href="#bus" x="1168" y="308" width="10" height="10"/><use href="#bus" x="1169" y="328" width="10" height="10"/><use href="#bus" x="1167" y="344" width="10" height="10"/><use href="#train" x="1239" y="252" width="10" height="10"/><use href="#train" x="1229" y="295" width="10" height="10"/><use href="#train" x="1302" y="268" width="10" height="10"/><use href="#bus" x="1277" y="282" width="10" height="10"/><use href="#bus" x="1287" y="300" width="10" height="10"/><use href="#train" x="1227" y="317" width="10" height="10"/><use href="#train" x="1238" y="335" width="10" height="10"/><use href="#train" x="1257" y="328" width="10" height="10"/><use href="#train" x="1200" y="337" width="10" height="10"/><use href="#train" x="1184" y="376" width="10" height="10"/><use href="#bus" x="1213" y="378" width="10" height="10"/><use href="#bus" x="1197" y="385" width="10" height="10"/><use href="#bus" x="1193" y="396" width="10" height="10"/><use href="#train" x="1265" y="387" width="10" height="10"/><use href="#train" x="1250" y="410" width="10" height="10"/><use href="#bus" x="1218" y="427" width="10" height="10"/><use href="#train" x="1174" y="436" width="10" height="10"/><use href="#train" x="1245" y="439" width="10" height="10"/><use href="#train" x="1199" y="462" width="10" height="10"/><use href="#train" x="1245" y="463" width="10" height="10"/><use href="#train" x="1233" y="472" width="10" height="10"/><use href="#train" x="1210" y="500" width="10" height="10"/><use href="#bus" x="1215" y="543" width="10" height="10"/><use href="#bus" x="1202" y="560" width="10" height="10"/><use href="#bus" x="1196" y="578" width="10" height="10"/><use href="#bus" x="1175" y="585" width="10" height="10"/><use href="#bus" x="1650" y="403" width="10" height="10"/><use href="#train" x="1606" y="474" width="10" height="10"/><use href="#train" x="1327" y="243" width="10" height="10"/>
            </g>

            <g class="labels">
              <text x="1271" y="245" textLength="25">East</text><text x="1333" y="245" textLength="25">East</text>
              <text x="1227" y="267.500" textLength="71">Elphinstone</text>
              <text x="1254.500" y="304.500" textLength="31">Parel</text>
              <text x="1227.500" y="332" textLength="70">Chinchpokli</text>
              <text x="1218.500" y="353" textLength="32">Jacob</text><text x="1219" y="366" textLength="33">Circle</text>
              <text x="1289.500" y="325.500" textLength="33">Sewri</text><text x="1289" y="338.500" textLength="25">East</text>
              <text x="1280" y="364" textLength="29">Reay</text><text x="1280" y="376.500" textLength="30">Road</text>
              <text x="1192" y="434.500" textLength="48">Girgaon</text>
              <text x="1289" y="428" textLength="41">Chinch</text><text x="1289" y="441" textLength="42">Bandar</text>
              <text x="1113" y="480.500" textLength="66">Raj Bhavan</text>
              <text x="1210" y="521.500" textLength="41">Church</text><text x="1210" y="534.500" textLength="28">Gate</text>
              <text x="1210" y="574" textLength="40">Colaba</text>
              <text class="big" x="1236" y="495.500" textLength="95">Mumbai</text>
              <g class="soft"><text x="1297.500" y="289" textLength="25">Gadi</text><text x="1297.500" y="301.500" textLength="30">Adda</text><text x="1166" y="401" textLength="53">Kawasaji</text><text x="1165.500" y="414" textLength="90">Bhedwar Chawl</text><text x="1447.500" y="257.500" textLength="66">Gavanpada</text><text x="1544.500" y="601.500" textLength="38">Mhora</text><text x="1632" y="639" textLength="47">Dongari</text><text x="1597.500" y="657.500" textLength="72">Boripakhadi</text></g>
              <g class="isle"><text x="1447" y="427" textLength="43">Butcher</text><text x="1447.500" y="441" textLength="33">Island</text><text x="1553" y="408" textLength="55">Elephanta</text><text x="1553" y="422.500" textLength="33">Island</text></g>
              <g class="port"><text x="1615" y="456" textLength="71">JNPT Shipping</text><text x="1615" y="468" textLength="44">Terminal</text></g>
            </g>
            <path d="M1610 502h22v11q-1 6-11 7-10-1-11-7z" fill="#f7f089" stroke="#222" stroke-width="1.400"/>
            <text class="shield" x="1621" y="509.500">NH</text><text class="shield" x="1621" y="517.500">348</text>
            <rect x="1711" y="591" width="22" height="11" rx="2" fill="#3ea34c" stroke="#e4f4e4"/><text class="road-m" x="1716" y="600" textLength="12">MS</text>

            <path d="M1121.500 459l-10-11.500a12.500 12.500 0 1120 0z" fill="#206fe6" stroke="#fff" stroke-width="2"/>
            <g transform="translate(535 655.500) rotate(-43)"><text class="here-logo" x="0" y="0" textLength="35" lengthAdjust="spacingAndGlyphs">here</text></g><path d="M526 654h8l-3.500 5z" fill="#2b3647"/>
            <text class="copyright" x="524.500" y="670" textLength="188.500">© 1987–2021 HERE | Terms of use</text>
            <path d="M1527 667v6h148v-6" fill="none" stroke="#000" stroke-width="2"/>
            <text class="scale" x="1643" y="668" textLength="25">5 km</text>
            <rect x="1690" y="424" width="31" height="73" rx="15.500" fill="#1c2029"/><path d="M1699.500 446h13M1706 439.500v13M1699.500 475h13" stroke="#fff" stroke-width="2.500"/>
            <circle cx="1705.500" cy="659.500" r="15.500" fill="#1c2029"/><path d="M1706 652l9 4.500-9 4.500-9-4.500z" fill="#fff"/><path d="M1697.500 660.500l8.500 4.500 8.500-4.500" fill="none" stroke="#fff" stroke-width="1.800"/>
          </svg>

          <div class="form">
            <p>Your location will only be shared to college authorities and nearby user for connectivity<br>under no circumstances it will be shared to 3rd party application</p>
            <label>Latitude</label>
            <div class="field">18.947489701522</div>
            <label>Longitude</label>
            <div class="field">72.798528035645</div>
            <span class="update"><svg width="22" height="22" viewBox="0 0 1792 1792"><path fill="#fff" d="M1671 566q0 40-28 68l-724 724-136 136q-28 28-68 28t-68-28l-136-136-362-362q-28-28-28-68t28-68l136-136q28-28 68-28t68 28l294 295 656-657q28-28 68-28t68 28l136 136q28 28 28 68z"/></svg>update location</span>
          </div>
          <footer class="page-footer"></footer>
        </div>
      </section>
      <div class="scrollbar"><i></i></div>
    </div>
  </main>
</div>
</body>
</html>
```

FILE: styles.css
```css
* { box-sizing: border-box; }
body { margin: 0; width: 1920px; height: 1080px; overflow: hidden; display: flex; flex-direction: column; background: #fff; }
svg { flex: none; display: block; }
.defs { position: absolute; }

/* system bar */
.gnome-bar { flex: none; height: 27px; background: #1d1d1d; color: #eeeeec; font: 14px/26px "Noto Sans", sans-serif; display: grid; grid-template-columns: 109px 1fr 1fr 134px; align-items: center; }
.gnome-activities { padding-left: 12px; letter-spacing: .3px; }
.gnome-app { display: flex; align-items: center; gap: 6px; }
.gnome-app span { letter-spacing: -.05px; }
.gnome-clock { letter-spacing: -.15px; padding-left: 7px; justify-self: start; }
.gnome-tray { display: flex; align-items: center; gap: 12px; }
.gnome-tray svg:nth-child(3) { margin-left: 2px; }
.gnome-tray svg:nth-child(4) { margin-left: 3px; }

.desktop { flex: 1; min-height: 0; display: flex; }

/* dock */
.dock { flex: none; width: 72px; display: flex; flex-direction: column; overflow: hidden; border-right: 1px solid #3b3431; background: linear-gradient(#454b4b 0, #484745 3%, #5a4841 12%, #50443f 17%, #57453f 20%, #504340 31%, #5a483f 45%, #5e4840 56%, #464645 60%, #5c4a42 68%, #5c4d3f 80%, #5d4c3d 90%, #5b4947 100%); }
.dock-cell { position: relative; flex: none; height: 68px; display: flex; align-items: center; justify-content: center; }
.dock-cell-cut { height: 31px; align-items: flex-end; padding-bottom: 11px; }
.dock-cell-apps { height: 70px; padding-top: 2px; }
.dock-cell svg { position: relative; }
.dock-active { position: absolute; left: 4px; top: 2px; width: 64px; height: 64px; border-radius: 4px; background: #6c6764; }
.pips { position: absolute; left: 4px; width: 6px; background: radial-gradient(circle at 3px 3px, #e95420 2.6px, transparent 3.2px) 0 0 / 6px 8.7px repeat-y; z-index: 1; }
.pips-1 { height: 7px; }
.pips-2 { height: 15px; }
.pips-3 { height: 24px; }

/* browser window */
.browser { flex: 1; min-width: 0; display: flex; flex-direction: column; font-family: "Noto Sans", sans-serif; font-size: 14px; color: #3c4043; }
.tabstrip { flex: none; height: 34px; background: #dee1e9; display: flex; align-items: center; padding-left: 8px; }
.tab { width: 240px; height: 34px; background: #fff; border-radius: 8px 8px 0 0; display: flex; align-items: center; padding: 0 12px; }
.tab-title { flex: 1; padding: 0 0 2px 8px; letter-spacing: .25px; }
.new-tab { margin-left: 16px; }
.window-buttons { margin-left: auto; display: flex; align-items: center; gap: 22.500px; padding-right: 13px; }
.toolbar { flex: none; height: 34px; display: flex; align-items: center; padding: 4px 19px 2px 15px; }
.tool-forward { margin-left: 18px; }
.tool-reload { margin-left: 18px; }
.omnibox { flex: none; width: 1600px; height: 28px; margin-left: 15px; border-radius: 14px; background: #f1f3f4; display: flex; align-items: center; padding: 0 10px 0 11px; }
.url { flex: 1; padding: 0 0 2px 9px; color: #6a6e73; letter-spacing: -.15px; }
.url b { font-weight: 400; color: #202124; }
.omnibox svg:last-child { margin-left: 17px; }
.tool-ext { margin-left: 14px; margin-right: 17px; }
.toolbar > svg:nth-of-type(5) { margin-right: 13px; }
.tool-menu { margin-left: auto; }
.bookmarks { flex: none; height: 36px; border-bottom: 1px solid #d2d4d7; display: grid; grid-template-columns: 75px 154px 154px 154px 154px 116px 154px 89px 154px 154px 32px 154px 1fr auto; align-items: center; padding: 0 18px 1px 14px; }
.bookmark { display: flex; align-items: center; gap: 8px; white-space: nowrap; letter-spacing: .55px; }
.bookmark > span { padding-bottom: 2px; }
.bookmark:nth-child(1), .bookmark:nth-child(6), .bookmark:nth-child(8) { letter-spacing: .1px; }
.bookmark svg { fill: #24292e; }
.apps-icon { margin-left: 1px; margin-right: 1px; }
.bookmark-more { font-size: 16px; padding-bottom: 2px; margin-right: 1px; }

/* page */
.page { flex: 1; min-height: 0; display: flex; font: 17.6px/26.4px "Liberation Sans", Arial, sans-serif; color: #212529; }
.sidebar { flex: none; width: 275px; background: #343740; display: flex; flex-direction: column; color: #868a93; }
.brand { flex: none; height: 66px; padding: 20px 17px; font-size: 22px; color: #fff; white-space: nowrap; line-height: 26px; }
.menu { flex: 1; margin: -4px 0 0; padding: 0; list-style: none; }
.menu li { height: 61.2px; padding: 0 18px 0 17.4px; display: flex; align-items: center; gap: 4.9px; fill: currentColor; }
.menu .fw { width: 22.600px; height: 18px; }
.menu .em { width: 17.600px; height: 17.600px; }
.menu .slim { width: 12.600px; height: 17.600px; }
.chev { width: 6px; height: 13px; fill: currentColor; }
.menu .chev { margin-left: auto; }
.sidebar-toggle { flex: none; height: 62px; background: #21242c; display: flex; align-items: center; justify-content: center; }

.column { flex: 1; min-width: 0; display: flex; flex-direction: column; }
.navbar { flex: none; height: 66px; background: #343740; display: flex; align-items: center; color: #999ba0; padding: 0 0 1px 35px; }
.translate { width: 958px; padding-top: 4px; }
.lang-select { width: 159px; height: 20px; background: #fff; border: 1px solid #767676; color: #000; font-size: 14.67px; line-height: 18px; padding: 0 5px 0 4px; display: flex; align-items: center; justify-content: space-between; }
.powered { font-size: 12.100px; line-height: 16px; margin-top: 7px; color: #666a70; white-space: nowrap; }
.google { font: 700 12.500px/12px "Lato", sans-serif; letter-spacing: -.4px; }
.g-blue { color: #4a5cf0; } .g-red { color: #d5211c; } .g-yellow { color: #d8a90c; } .g-green { color: #159a48; }
.translate-word { color: #484b52; letter-spacing: .35px; }
.alert-link { position: relative; width: 81px; display: flex; align-items: center; gap: 18px; left: -1px; }
.dot { position: absolute; left: 15px; top: -3px; width: 9px; height: 9px; border-radius: 50%; }
.dot-blue { background: #3733ff; } .dot-yellow { background: #ffcc00; }
.search { display: flex; height: 41px; width: 295px; margin: -2px 0 0 -13px; }
.search-field { flex: 1; background: #fff; border: 1px solid #cfd3da; border-radius: 4px 0 0 4px; padding: 6px 14px; color: #6d757d; }
.search-button { width: 45px; background: #3733ff; border-radius: 0 4px 4px 0; display: flex; align-items: center; justify-content: center; }
.logout { display: flex; align-items: center; gap: 7px; padding-left: 17px; }

.content { flex: 1; min-height: 0; overflow: hidden; display: flex; flex-direction: column; align-items: flex-start; padding: 0 16px 0 17px; background: #fff; }
.breadcrumb { flex: none; align-self: stretch; height: 53px; margin-top: -26px; background: #e9eaee; border-radius: 4px; padding: 13px 17px; display: flex; gap: 9px; color: #6c757d; }
.breadcrumb a { color: #3733ff; margin-left: 4px; }
.map { width: 1210px; height: 440px; margin: 17px 0 0 154px; }
.labels text { font: 500 12.800px "Noto Sans", sans-serif; text-anchor: middle; fill: #3a3a55; stroke: #eef1f5; stroke-width: 2px; paint-order: stroke; stroke-opacity: .8; }
.labels .big { font-size: 24.500px; font-weight: 500; }
.labels .soft text { fill: #85868c; }
.labels .isle text { fill: #56782c; }
.labels .port text { font-size: 11.500px; fill: #4a5a80; }
.shield { font: 700 8.500px "Noto Sans", sans-serif; fill: #222; text-anchor: middle; }
.road-m { font: 700 8.500px "Noto Sans", sans-serif; fill: #fff; }
.here-logo { font: 900 18px "Lato", sans-serif; fill: #2b3647; stroke: #2b3647; stroke-width: .8px; }
.copyright { font: 12px "Liberation Sans", Arial, sans-serif; fill: #2b3647; }
.scale { font: 700 11px "Liberation Sans", Arial, sans-serif; stroke: #fff; stroke-width: 1.500px; paint-order: stroke; stroke-opacity: .7; }
.form { margin-left: 467px; width: 699px; padding-top: 52px; display: flex; flex-direction: column; align-items: flex-start; }
.form p { margin: 0 0 69px; }
.form label { height: 27px; }
.field { width: 699px; height: 42px; border: 1px solid #ced2da; border-radius: 4px; background: #e9eaee; color: #6d757d; padding: 7px 14px; }
.update { display: flex; align-items: center; gap: 6px; height: 53px; width: 215px; margin-top: 17px; padding: 1px 19px 0; background: #00b848; color: #fff; font-size: 22px; border-radius: 5px; white-space: nowrap; }
.page-footer { flex: none; height: 20px; margin: 8px -16px 0 -17px; align-self: stretch; background: #e9eaee; }
.scrollbar { flex: none; width: 11px; background: #343740; padding-top: 35px; }
.scrollbar i { display: block; height: 864px; background: #888; }
```
